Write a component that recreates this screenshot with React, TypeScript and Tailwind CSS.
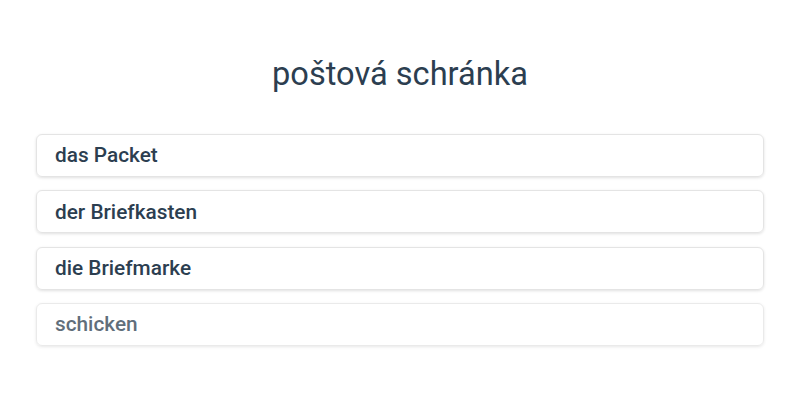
const options = ["das Packet", "der Briefkasten", "die Briefmarke", "schicken"];

export default function App() {
  return (
    <div className="w-[800px] h-[400px] bg-white font-['Roboto',sans-serif] text-[#2c3e50] px-9 pt-[52px]">
      <h1 className="text-center text-[32.6px] leading-[44px] font-normal">poštová schránka</h1>
      <div className="mt-[38px] flex flex-col gap-[13.3px]">
        {options.map((o, i) => (
          <div
            key={o}
            className={`h-[43px] flex items-center pt-[1px] px-[18px] rounded-md border border-[#e4e4e4] shadow-[0_1px_3px_rgba(0,0,0,0.12)] text-[20.8px] font-medium ${
              i === 3 ? "opacity-75" : ""
            }`}
          >
            {o}
          </div>
        ))}
      </div>
    </div>
  );
}
